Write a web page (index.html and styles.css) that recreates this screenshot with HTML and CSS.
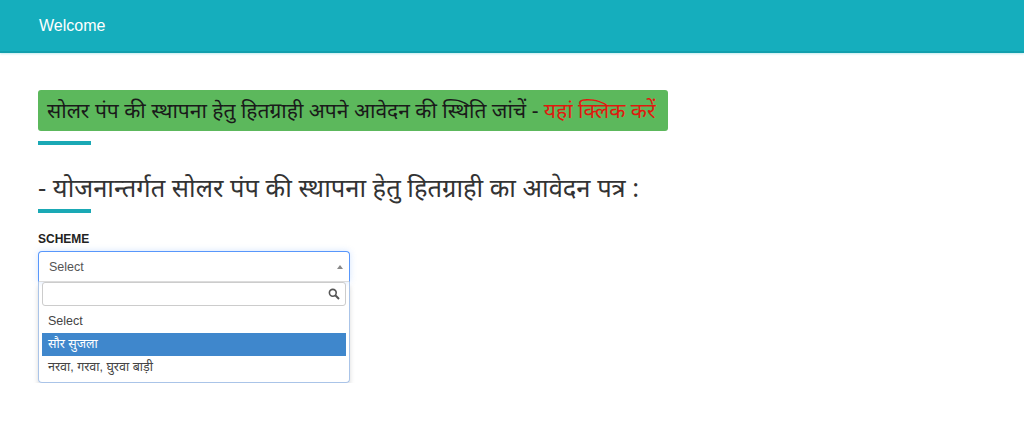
FILE: index.html
```html
<!DOCTYPE html>
<html lang="hi">
<head>
    <meta charset="UTF-8">
    <meta name="viewport" content="width=device-width, initial-scale=1.0">
    <title>Welcome</title>
    <link rel="stylesheet" href="styles.css">
</head>
<body>
    <header class="topbar">
        <span class="brand">Welcome</span>
    </header>
    <main class="content">
        <div class="status-box">
            सोलर पंप की स्थापना हेतु हितग्राही अपने आवेदन की स्थिति जांचें - <a href="#" class="status-link">यहां क्लिक करें</a>
        </div>
        <div class="bar"></div>
        <h2 class="form-title">- योजनान्तर्गत सोलर पंप की स्थापना हेतु हितग्राही का आवेदन पत्र :</h2>
        <div class="bar"></div>
        <label class="field-label">SCHEME</label>
        <div class="chosen">
            <div class="chosen-single">
                <span>Select</span>
                <span class="arrow"></span>
            </div>
            <div class="chosen-drop">
                <div class="chosen-search">
                    <input type="text">
                    <svg class="search-icon" width="12" height="12" viewBox="0 0 12 12">
                        <circle cx="4.8" cy="4.8" r="3.4" fill="none" stroke="#555" stroke-width="1.6"/>
                        <line x1="7.3" y1="7.3" x2="11" y2="11" stroke="#555" stroke-width="2"/>
                    </svg>
                </div>
                <ul class="chosen-results">
                    <li>Select</li>
                    <li class="highlighted">सौर सुजला</li>
                    <li>नरवा, गरवा, घुरवा बाड़ी</li>
                </ul>
            </div>
        </div>
    </main>
</body>
</html>
```

FILE: styles.css
```css
body {
    margin: 0;
    font-family: "Liberation Sans", "Noto Sans", sans-serif;
    background-color: #fff;
    color: #333;
}
.topbar {
    background-color: #15aebd;
    border-bottom: 2px solid #129fad;
    height: 51px;
    display: flex;
    align-items: center;
    padding: 0 39px;
    box-shadow: 0 1px 2px rgba(21, 174, 189, 0.25);
}
.brand {
    color: #fff;
    font-size: 16px;
}
.content {
    padding: 37px 38px 0;
}
.status-box {
    display: inline-block;
    background-color: #5cb85c;
    border-radius: 3px;
    padding: 0 12px 0 9px;
    height: 41px;
    line-height: 41px;
    font-size: 21px;
    color: #1a1a1a;
    font-family: "Noto Sans", sans-serif;
}
.status-link {
    color: #e0190f;
    text-decoration: none;
}
.bar {
    width: 53px;
    height: 4px;
    background-color: #1aa9b5;
    margin-top: 10px;
}
.form-title {
    margin: 24px 0 0;
    font-weight: normal;
    font-size: 25.5px;
    line-height: 36px;
    font-family: "Noto Sans", sans-serif;
    color: #333;
}
.form-title + .bar {
    margin-top: 4px;
}
.field-label {
    display: block;
    margin-top: 19px;
    font-size: 12px;
    font-weight: bold;
    color: #222;
}
.chosen {
    width: 312px;
    margin-top: 5px;
    font-size: 12.5px;
}
.chosen-single {
    height: 29px;
    border: 1px solid #5897fb;
    border-bottom-color: #ddd;
    border-radius: 4px 4px 0 0;
    display: flex;
    align-items: center;
    justify-content: space-between;
    padding: 0 6px 0 10px;
    color: #555;
    box-shadow: 0 0 6px rgba(88, 151, 251, 0.25);
}
.arrow {
    width: 0;
    height: 0;
    border-left: 3px solid transparent;
    border-right: 3px solid transparent;
    border-bottom: 4px solid #888;
}
.chosen-drop {
    border: 1px solid #aac4e8;
    border-top: 0;
    border-radius: 0 0 4px 4px;
    box-shadow: 0 4px 5px rgba(0, 0, 0, 0.15);
}
.chosen-search {
    position: relative;
    padding: 0 3px;
}
.chosen-search input {
    box-sizing: border-box;
    width: 100%;
    height: 24px;
    border: 1px solid #ccc;
    border-radius: 3px;
    margin: 0;
    outline: none;
}
.search-icon {
    position: absolute;
    right: 9px;
    top: 6px;
}
.chosen-results {
    list-style: none;
    margin: 4px 3px 3px;
    padding: 0;
}
.chosen-results li {
    height: 23px;
    line-height: 23px;
    padding: 0 6px;
    color: #444;
}
.chosen-results li.highlighted {
    background-color: #3f87cc;
    color: #fff;
}
```
